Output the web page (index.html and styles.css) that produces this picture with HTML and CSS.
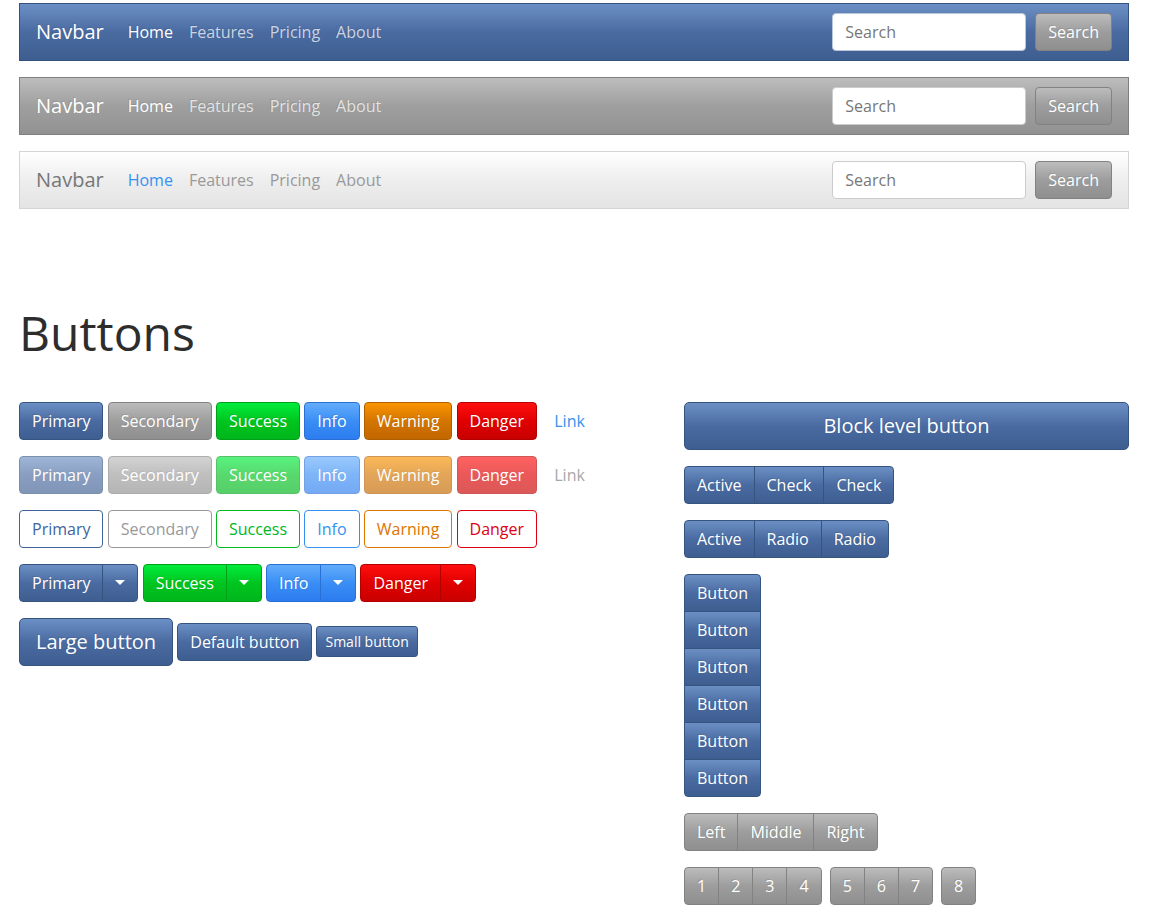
FILE: index.html
```html
<!DOCTYPE html>
<html>
<head>
<meta charset="utf-8">
<title>Buttons</title>
<link rel="stylesheet" href="styles.css">
</head>
<body>
<div class="page">
  <nav class="navbar navbar-primary">
    <a class="brand">Navbar</a>
    <ul class="nav">
      <li><a class="nav-link active">Home</a></li>
      <li><a class="nav-link">Features</a></li>
      <li><a class="nav-link">Pricing</a></li>
      <li><a class="nav-link">About</a></li>
    </ul>
    <form class="search">
      <input class="input" type="text" placeholder="Search">
      <button class="btn btn-secondary" type="button">Search</button>
    </form>
  </nav>

  <nav class="navbar navbar-gray">
    <a class="brand">Navbar</a>
    <ul class="nav">
      <li><a class="nav-link active">Home</a></li>
      <li><a class="nav-link">Features</a></li>
      <li><a class="nav-link">Pricing</a></li>
      <li><a class="nav-link">About</a></li>
    </ul>
    <form class="search">
      <input class="input" type="text" placeholder="Search">
      <button class="btn btn-secondary" type="button">Search</button>
    </form>
  </nav>

  <nav class="navbar navbar-light">
    <a class="brand">Navbar</a>
    <ul class="nav">
      <li><a class="nav-link active">Home</a></li>
      <li><a class="nav-link">Features</a></li>
      <li><a class="nav-link">Pricing</a></li>
      <li><a class="nav-link">About</a></li>
    </ul>
    <form class="search">
      <input class="input" type="text" placeholder="Search">
      <button class="btn btn-secondary" type="button">Search</button>
    </form>
  </nav>

  <h1 class="title">Buttons</h1>

  <div class="row">
    <div class="col-left">
      <div class="btn-row">
        <button class="btn btn-primary">Primary</button>
        <button class="btn btn-secondary">Secondary</button>
        <button class="btn btn-success">Success</button>
        <button class="btn btn-info">Info</button>
        <button class="btn btn-warning">Warning</button>
        <button class="btn btn-danger">Danger</button>
        <button class="btn btn-link">Link</button>
      </div>
      <div class="btn-row">
        <button class="btn btn-primary disabled">Primary</button>
        <button class="btn btn-secondary disabled">Secondary</button>
        <button class="btn btn-success disabled">Success</button>
        <button class="btn btn-info disabled">Info</button>
        <button class="btn btn-warning disabled">Warning</button>
        <button class="btn btn-danger disabled">Danger</button>
        <button class="btn btn-link link-disabled">Link</button>
      </div>
      <div class="btn-row">
        <button class="btn btn-outline-primary">Primary</button>
        <button class="btn btn-outline-secondary">Secondary</button>
        <button class="btn btn-outline-success">Success</button>
        <button class="btn btn-outline-info">Info</button>
        <button class="btn btn-outline-warning">Warning</button>
        <button class="btn btn-outline-danger">Danger</button>
      </div>
      <div class="btn-row">
        <div class="btn-group">
          <button class="btn btn-primary">Primary</button>
          <button class="btn btn-primary toggle"><span class="caret"></span></button>
        </div>
        <div class="btn-group">
          <button class="btn btn-success">Success</button>
          <button class="btn btn-success toggle"><span class="caret"></span></button>
        </div>
        <div class="btn-group">
          <button class="btn btn-info">Info</button>
          <button class="btn btn-info toggle"><span class="caret"></span></button>
        </div>
        <div class="btn-group">
          <button class="btn btn-danger">Danger</button>
          <button class="btn btn-danger toggle"><span class="caret"></span></button>
        </div>
      </div>
      <div class="btn-row">
        <button class="btn btn-primary btn-lg">Large button</button>
        <button class="btn btn-primary">Default button</button>
        <button class="btn btn-primary btn-sm">Small button</button>
      </div>
    </div>

    <div class="col-right">
      <button class="btn btn-primary btn-lg btn-block">Block level button</button>
      <div class="btn-group">
        <button class="btn btn-primary">Active</button>
        <button class="btn btn-primary">Check</button>
        <button class="btn btn-primary">Check</button>
      </div>
      <div class="btn-group">
        <button class="btn btn-primary">Active</button>
        <button class="btn btn-primary">Radio</button>
        <button class="btn btn-primary">Radio</button>
      </div>
      <div class="btn-group-vertical">
        <button class="btn btn-primary">Button</button>
        <button class="btn btn-primary">Button</button>
        <button class="btn btn-primary">Button</button>
        <button class="btn btn-primary">Button</button>
        <button class="btn btn-primary">Button</button>
        <button class="btn btn-primary">Button</button>
      </div>
      <div class="btn-group">
        <button class="btn btn-secondary">Left</button>
        <button class="btn btn-secondary">Middle</button>
        <button class="btn btn-secondary">Right</button>
      </div>
      <div class="toolbar">
        <div class="btn-group">
          <button class="btn btn-secondary">1</button>
          <button class="btn btn-secondary">2</button>
          <button class="btn btn-secondary">3</button>
          <button class="btn btn-secondary">4</button>
        </div>
        <div class="btn-group">
          <button class="btn btn-secondary">5</button>
          <button class="btn btn-secondary">6</button>
          <button class="btn btn-secondary">7</button>
        </div>
        <div class="btn-group">
          <button class="btn btn-secondary">8</button>
        </div>
      </div>
    </div>
  </div>
</div>
</body>
</html>
```

FILE: styles.css
```css
* { box-sizing: border-box; }

html, body {
  margin: 0;
  padding: 0;
  background: #fff;
}

body {
  font-family: "Open Sans", "Liberation Sans", sans-serif;
  font-size: 16px;
  line-height: 24px;
  color: #777;
}

.page {
  width: 1110px;
  margin-left: 19px;
  padding-top: 3px;
}

/* ---------- Navbars ---------- */
.navbar {
  display: flex;
  align-items: center;
  height: 58px;
  padding: 8px 16px;
  border: 1px solid;
  margin-bottom: 16px;
}

.brand {
  font-size: 20px;
  line-height: 30px;
  padding: 5px 0;
  margin-right: 16px;
}

.nav {
  display: flex;
  list-style: none;
  margin: 0;
  padding: 0;
}

.nav-link {
  display: block;
  padding: 8px;
  font-size: 16px;
  line-height: 24px;
}

.search {
  display: flex;
  align-items: center;
  margin: 0 0 0 auto;
}

.input {
  width: 194px;
  height: 38px;
  margin-right: 9px;
  padding: 6px 12px;
  font-family: "Open Sans", "Liberation Sans", sans-serif;
  font-size: 16px;
  line-height: 24px;
  color: #777;
  background: #fff;
  border: 1px solid #ccc;
  border-radius: 4px;
  outline: none;
}

.input::placeholder { color: #777; }

.navbar-primary {
  background-image: linear-gradient(#6b8fc4, #4a6ba1 50%, #3e5e91);
  border-color: #34527f;
}
.navbar-primary .input { border-color: #b9c7dc; }

.navbar-gray {
  background-image: linear-gradient(#bdbdbd, #9f9f9f 50%, #929292);
  border-color: #7f7f7f;
}

.navbar-primary .brand,
.navbar-gray .brand,
.navbar-primary .nav-link.active,
.navbar-gray .nav-link.active { color: #fff; }

.navbar-primary .nav-link,
.navbar-gray .nav-link { color: rgba(255, 255, 255, 0.72); }

.navbar-primary .brand,
.navbar-primary .nav-link,
.navbar-gray .brand,
.navbar-gray .nav-link { text-shadow: -1px -1px 0 rgba(0, 0, 0, 0.1); }

.navbar-light {
  background-image: linear-gradient(#ffffff, #eeeeee 50%, #e4e4e4);
  border-color: #d5d5d5;
}
.navbar-light .brand { color: #777; }
.navbar-light .nav-link { color: #999; }
.navbar-light .nav-link.active { color: #3592f0; }

/* ---------- Heading ---------- */
.title {
  margin: 95px 0 40px;
  font-size: 48px;
  line-height: 57.6px;
  font-weight: 400;
  color: #2d2d2d;
}

/* ---------- Layout ---------- */
.row {
  display: flex;
  align-items: flex-start;
}

.col-left {
  width: 665px;
}

.col-right {
  width: 445px;
  display: flex;
  flex-direction: column;
  align-items: flex-start;
  gap: 16px;
}

.btn-row {
  display: flex;
  align-items: center;
  gap: 4.2px;
  margin-bottom: 16px;
}

.toolbar {
  display: flex;
  gap: 8px;
}

/* ---------- Buttons ---------- */
.btn {
  display: inline-flex;
  align-items: center;
  justify-content: center;
  padding: 6px 12px;
  font-family: "Open Sans", "Liberation Sans", sans-serif;
  font-size: 16px;
  line-height: 24px;
  font-weight: 400;
  color: #fff;
  border: 1px solid transparent;
  border-radius: 4px;
  background: transparent;
  white-space: nowrap;
  cursor: pointer;
}

.btn-lg {
  padding: 8px 16px;
  font-size: 20px;
  line-height: 30px;
  border-radius: 5px;
}

.btn-sm {
  padding: 4px 8px;
  font-size: 14px;
  line-height: 21px;
  border-radius: 3px;
}

.btn-block {
  align-self: stretch;
  width: 100%;
}

.btn-primary,
.btn-secondary,
.btn-success,
.btn-info,
.btn-warning,
.btn-danger { text-shadow: -1px -1px 0 rgba(0, 0, 0, 0.1); }

.btn-primary {
  background-image: linear-gradient(#6b8fc4, #4a6ba1 50%, #3e5e91);
  border-color: #35547f;
}
.btn-secondary {
  background-image: linear-gradient(#bcbcbc, #9d9d9d 50%, #8f8f8f);
  border-color: #828282;
}
.btn-success {
  background-image: linear-gradient(#00ec3c, #00c51f 50%, #00b61b);
  border-color: #00a118;
}
.btn-info {
  background-image: linear-gradient(#63acfb, #3a8ef5 50%, #2c7cef);
  border-color: #2a6fd6;
}
.btn-warning {
  background-image: linear-gradient(#fb9400, #d47500 50%, #c26700);
  border-color: #b05f00;
}
.btn-danger {
  background-image: linear-gradient(#ff0f0f, #e00000 50%, #c90000);
  border-color: #b30000;
}

.btn.disabled { opacity: 0.65; }

.btn-link {
  color: #3592f0;
  border-color: transparent;
}
.link-disabled { color: #a8a8a8; }

.btn-outline-primary { color: #40659e; border-color: #40659e; background: #fff; }
.btn-outline-secondary { color: #999; border-color: #999; background: #fff; }
.btn-outline-success { color: #00b81f; border-color: #00b81f; background: #fff; }
.btn-outline-info { color: #3592f0; border-color: #3592f0; background: #fff; }
.btn-outline-warning { color: #dc7500; border-color: #dc7500; background: #fff; }
.btn-outline-danger { color: #dc0010; border-color: #dc0010; background: #fff; }

/* ---------- Groups ---------- */
.btn-group {
  display: inline-flex;
}

.btn-group > .btn + .btn {
  margin-left: -1px;
}

.btn-group > .btn:not(:last-child) {
  border-top-right-radius: 0;
  border-bottom-right-radius: 0;
}

.btn-group > .btn:not(:first-child) {
  border-top-left-radius: 0;
  border-bottom-left-radius: 0;
}

.btn-group-vertical {
  display: inline-flex;
  flex-direction: column;
  align-items: stretch;
}

.btn-group-vertical > .btn + .btn {
  margin-top: -1px;
}

.btn-group-vertical > .btn:not(:last-child) {
  border-bottom-left-radius: 0;
  border-bottom-right-radius: 0;
}

.btn-group-vertical > .btn:not(:first-child) {
  border-top-left-radius: 0;
  border-top-right-radius: 0;
}

.toggle {
  padding-left: 12px;
  padding-right: 12px;
}

.caret {
  display: inline-block;
  width: 0;
  height: 0;
  border-top: 5px solid #fff;
  border-left: 5px solid transparent;
  border-right: 5px solid transparent;
}
```
